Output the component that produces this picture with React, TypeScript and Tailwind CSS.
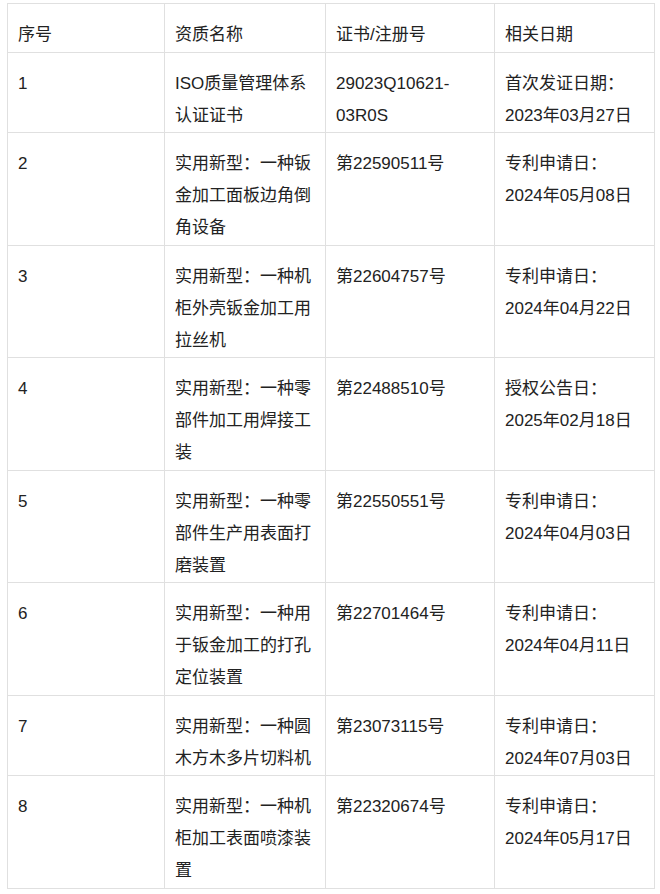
const rows: { no: string; name: string[]; code: string[]; date: string[] }[] = [
  { no: '1', name: ['ISO质量管理体系', '认证证书'], code: ['29023Q10621-', '03R0S'], date: ['首次发证日期：', '2023年03月27日'] },
  { no: '2', name: ['实用新型：一种钣', '金加工面板边角倒', '角设备'], code: ['第22590511号'], date: ['专利申请日：', '2024年05月08日'] },
  { no: '3', name: ['实用新型：一种机', '柜外壳钣金加工用', '拉丝机'], code: ['第22604757号'], date: ['专利申请日：', '2024年04月22日'] },
  { no: '4', name: ['实用新型：一种零', '部件加工用焊接工', '装'], code: ['第22488510号'], date: ['授权公告日：', '2025年02月18日'] },
  { no: '5', name: ['实用新型：一种零', '部件生产用表面打', '磨装置'], code: ['第22550551号'], date: ['专利申请日：', '2024年04月03日'] },
  { no: '6', name: ['实用新型：一种用', '于钣金加工的打孔', '定位装置'], code: ['第22701464号'], date: ['专利申请日：', '2024年04月11日'] },
  { no: '7', name: ['实用新型：一种圆', '木方木多片切料机'], code: ['第23073115号'], date: ['专利申请日：', '2024年07月03日'] },
  { no: '8', name: ['实用新型：一种机', '柜加工表面喷漆装', '置'], code: ['第22320674号'], date: ['专利申请日：', '2024年05月17日'] },
]

function Lines({ lines }: { lines: string[] }) {
  return (
    <>
      {lines.map((l, i) => (
        <div key={i} className="whitespace-nowrap">
          {l}
        </div>
      ))}
    </>
  )
}

const cell = 'border border-[#e0e0e0] pl-[10px] pr-[8px] pt-[15px] pb-[0.5px] align-top text-left font-normal'

export default function App() {
  return (
    <div className="min-h-[894px] w-[660px] bg-white pt-[3px] pl-[7px]">
      <table
        className="w-[647px] table-fixed border-collapse text-[17px] leading-[32px] text-[#222]"
        style={{ fontFamily: '"Liberation Sans", Arial, "Noto Sans CJK SC", sans-serif' }}
      >
        <colgroup>
          <col className="w-[157px]" />
          <col className="w-[161px]" />
          <col className="w-[169px]" />
          <col className="w-[160px]" />
        </colgroup>
        <thead>
          <tr>
            <th className={cell}>序号</th>
            <th className={cell}>资质名称</th>
            <th className={cell}>证书/注册号</th>
            <th className={cell}>相关日期</th>
          </tr>
        </thead>
        <tbody>
          {rows.map((r) => (
            <tr key={r.no}>
              <td className={cell}>{r.no}</td>
              <td className={cell}>
                <Lines lines={r.name} />
              </td>
              <td className={cell}>
                <Lines lines={r.code} />
              </td>
              <td className={cell}>
                <Lines lines={r.date} />
              </td>
            </tr>
          ))}
        </tbody>
      </table>
    </div>
  )
}
